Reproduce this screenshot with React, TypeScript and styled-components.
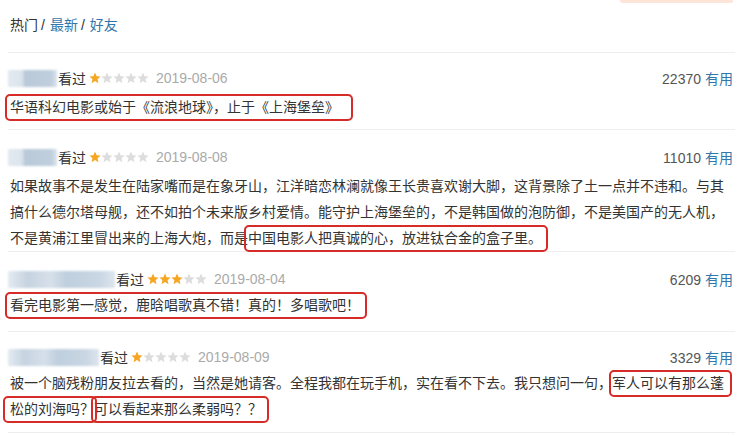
import React from 'react';
import styled, { createGlobalStyle } from 'styled-components';

const GlobalStyle = createGlobalStyle`
  html, body {
    margin: 0;
    padding: 0;
    background: #fff;
  }
  body {
    font-family: "Liberation Sans", "Noto Sans CJK SC", sans-serif;
    -webkit-font-smoothing: antialiased;
  }
`;

const Page = styled.div`
  width: 727px;
  margin-left: 8px;
  color: #333;
  font-size: 14px;
`;

const TopBar = styled.div`
  display: flex;
  justify-content: flex-end;
  padding-right: 2px;
`;

const PeachTab = styled.div`
  width: 113px;
  height: 3px;
  background: #fde6d9;
  border-radius: 0 0 2px 2px;
`;

const Tabs = styled.div`
  display: flex;
  align-items: center;
  height: 20px;
  padding: 12px 2px 17px;
  border-bottom: 1px solid #eeeeee;
  line-height: 20px;
`;

const Tab = styled.span<{ $active?: boolean }>`
  color: ${(p) => (p.$active ? '#333' : '#3377aa')};
`;

const Slash = styled.span`
  color: #333;
  margin: 0 5px 0 3px;
`;

const Review = styled.div<{ $pt: number; $pb: number }>`
  padding: ${(p) => p.$pt}px 2px ${(p) => p.$pb}px;
  border-bottom: 1px solid #eeeeee;
`;

const Header = styled.div`
  display: flex;
  align-items: center;
  height: 24px;
`;

const BlurName = styled.span<{ $w: number }>`
  display: inline-block;
  width: ${(p) => p.$w}px;
  height: 17px;
  margin-left: -2px;
  background: ${(p) =>
    p.$w > 60
      ? 'linear-gradient(90deg, #e4ebf2 0%, #c6d3e0 18%, #d6e0ea 40%, #bfcfde 55%, #c9d6e3 85%, #dde5ee 100%)'
      : 'linear-gradient(90deg, #e2e9f1 0%, #dbe4ed 28%, #b9c9d9 35%, #c0cfdd 88%, #dce4ed 100%)'};
  filter: blur(1.2px);
`;

const Watched = styled.span`
  color: #333;
  margin-left: 1px;
`;

const Stars = styled.span`
  display: inline-flex;
  gap: 0;
  margin-left: 3px;
`;

const Date = styled.span`
  color: #aaaaaa;
  margin-left: 7px;
`;

const Votes = styled.span`
  margin-left: auto;
  color: #555;
`;

const Useful = styled.span`
  color: #3377aa;
  margin-left: 4px;
`;

const Content = styled.div<{ $gap: number }>`
  margin-top: ${(p) => p.$gap}px;
  line-height: 26px;
  color: #333;
  white-space: nowrap;
`;

const Mark = styled.span<{ $l?: number; $r?: number }>`
  outline: 2px solid #d62b26;
  outline-offset: 1px;
  border-radius: 2px;
  padding: 2px ${(p) => p.$r ?? 1}px 3px ${(p) => p.$l ?? 1}px;
  margin-left: ${(p) => -(p.$l ?? 1)}px;
  margin-right: ${(p) => -(p.$r ?? 1)}px;
`;

const Star: React.FC<{ on: boolean }> = ({ on }) => (
  <svg width="12" height="12" viewBox="0 0 24 24">
    <polygon
      points="12,1 15.2,8.4 23.2,9.1 17.1,14.4 18.9,22.3 12,18.1 5.1,22.3 6.9,14.4 0.8,9.1 8.8,8.4"
      fill={on ? '#f6a623' : '#dddddd'}
    />
  </svg>
);

const Rating: React.FC<{ value: number }> = ({ value }) => (
  <Stars>
    {[0, 1, 2, 3, 4].map((i) => (
      <Star key={i} on={i < value} />
    ))}
  </Stars>
);

type Item = {
  name: number;
  stars: number;
  date: string;
  votes: string;
  pt: number;
  gap: number;
  pb: number;
  body: React.ReactNode;
};

const reviews: Item[] = [
  {
    name: 49,
    stars: 1,
    date: '2019-08-06',
    votes: '22370',
    pt: 13,
    gap: 4,
    pb: 9,
    body: (
      <Mark $l={2} $r={11}>华语科幻电影或始于《流浪地球》，止于《上海堡垒》</Mark>
    ),
  },
  {
    name: 49,
    stars: 1,
    date: '2019-08-08',
    votes: '11010',
    pt: 15,
    gap: 4,
    pb: 0,
    body: (
      <>
        如果故事不是发生在陆家嘴而是在象牙山，江洋暗恋林澜就像王长贵喜欢谢大脚，这背景除了土一点并不违和。与其
        <br />
        搞什么德尔塔母舰，还不如拍个未来版乡村爱情。能守护上海堡垒的，不是韩国做的泡防御，不是美国产的无人机，
        <br />
        不是黄浦江里冒出来的上海大炮，而是<Mark $r={3}>中国电影人把真诚的心，放进钛合金的盒子里。</Mark>
      </>
    ),
  },
  {
    name: 107,
    stars: 3,
    date: '2019-08-04',
    votes: '6209',
    pt: 15,
    gap: 1,
    pb: 13,
    body: <Mark $l={2} $r={4}>看完电影第一感觉，鹿晗唱歌真不错！真的！多唱歌吧！</Mark>,
  },
  {
    name: 91,
    stars: 1,
    date: '2019-08-09',
    votes: '3329',
    pt: 13,
    gap: 1,
    pb: 10,
    body: (
      <>
        被一个脑残粉朋友拉去看的，当然是她请客。全程我都在玩手机，实在看不下去。我只想问一句，
        <Mark $l={0} $r={5}>军人可以有那么蓬</Mark>
        <br />
        <Mark $l={4} $r={0}>松的刘海吗？</Mark>
        <Mark $l={0} $r={4}>可以看起来那么柔弱吗？？</Mark>
      </>
    ),
  },
];

const App: React.FC = () => (
  <>
    <GlobalStyle />
    <Page>
      <TopBar>
        <PeachTab />
      </TopBar>
      <Tabs>
        <Tab $active>热门</Tab>
        <Slash>/</Slash>
        <Tab>最新</Tab>
        <Slash>/</Slash>
        <Tab>好友</Tab>
      </Tabs>
      {reviews.map((r, i) => (
        <Review key={i} $pt={r.pt} $pb={r.pb}>
          <Header>
            <BlurName $w={r.name} />
            <Watched>看过</Watched>
            <Rating value={r.stars} />
            <Date>{r.date}</Date>
            <Votes>
              {r.votes}
              <Useful>有用</Useful>
            </Votes>
          </Header>
          <Content $gap={r.gap}>{r.body}</Content>
        </Review>
      ))}
    </Page>
  </>
);

export default App;
